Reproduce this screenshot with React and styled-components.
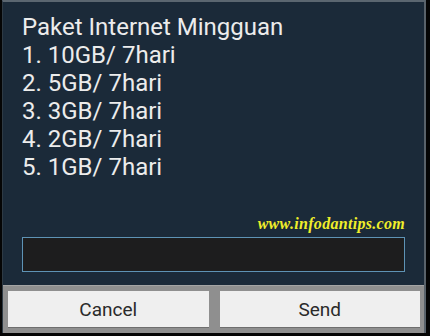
import React from "react";
import styled, { createGlobalStyle } from "styled-components";

const Global = createGlobalStyle`
    html, body {
        margin: 0;
        padding: 0;
        background: #050505;
    }
`;

const Screen = styled.div`
    width: 430px;
    height: 336px;
    display: flex;
    flex-direction: column;
    padding: 0 4px 0 2px;
    box-sizing: border-box;
    background: #050505;
`;

const Dialog = styled.div`
    flex: 1;
    display: flex;
    flex-direction: column;
    border-top: 2px solid #5b6670;
    border-left: 1px solid #2e3a44;
    border-right: 2px solid #59626a;
    margin-bottom: 3px;
`;

const Body = styled.div`
    background: #1b2a39;
    padding: 11px 19px 13px 19px;
    display: flex;
    flex-direction: column;
`;

const Line = styled.div`
    font-family: Roboto, "Noto Sans", sans-serif;
    font-size: 24px;
    line-height: 28px;
    color: #ececec;
    white-space: nowrap;
`;

const Credit = styled.div`
    margin-top: 34px;
    align-self: flex-end;
    margin-right: 0;
    font-family: "Liberation Serif", "DejaVu Serif", serif;
    font-style: italic;
    font-weight: bold;
    font-size: 16px;
    line-height: 18px;
    color: #f0ee2a;
    letter-spacing: 0.3px;
`;

const Field = styled.div`
    margin-top: 4px;
    height: 33px;
    border: 1px solid #5e93b5;
    background: #1d1d1e;
`;

const ButtonBar = styled.div`
    flex: 1;
    background: #8f8f8f;
    display: grid;
    grid-template-columns: 1fr 1fr;
    gap: 11px;
    padding: 5px 4px 6px 5px;
    border-top: 1px solid #a4a4a4;
`;

const Button = styled.div`
    background: #efefef;
    display: flex;
    align-items: center;
    justify-content: center;
    font-family: Roboto, "Noto Sans", sans-serif;
    font-size: 19px;
    color: #2a2a2a;
    box-shadow: 0 1px 0 #6e6e6e;
`;

const items = ["10GB", "5GB", "3GB", "2GB", "1GB"];

export default function App() {
    return (
        <Screen>
            <Global />
            <Dialog>
                <Body>
                    <Line>Paket Internet Mingguan</Line>
                    {items.map((size, i) => (
                        <Line key={size}>
                            {i + 1}. {size}/ 7hari
                        </Line>
                    ))}
                    <Credit>www.infodantips.com</Credit>
                    <Field />
                </Body>
                <ButtonBar>
                    <Button>Cancel</Button>
                    <Button>Send</Button>
                </ButtonBar>
            </Dialog>
        </Screen>
    );
}
